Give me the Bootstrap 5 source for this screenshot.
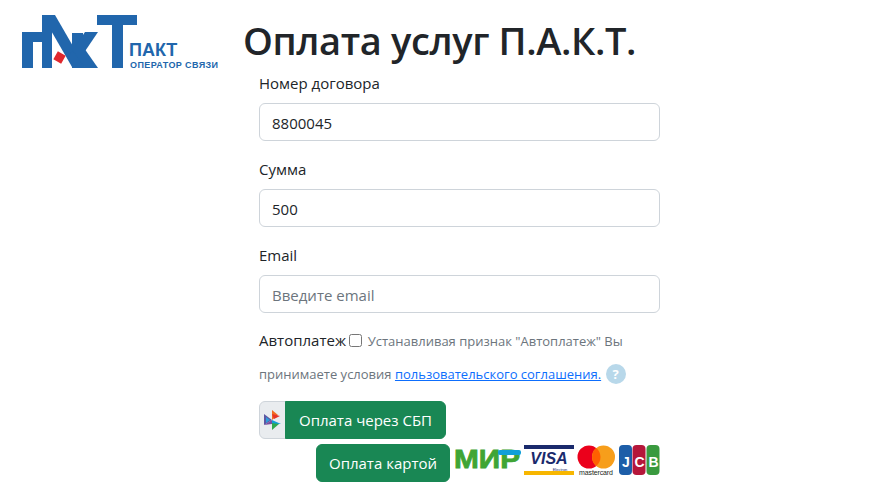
<!DOCTYPE html>
<html lang="ru">
<head>
  <meta charset="UTF-8">
  <title>Оплата услуг П.А.К.Т.</title>
  <meta name="viewport" content="width=device-width, initial-scale=1">
  <link href="https://cdn.jsdelivr.net/npm/bootstrap@5.3.0/dist/css/bootstrap.min.css" rel="stylesheet">
  <style>
    body { font-family: "Open Sans", "Noto Sans", sans-serif; font-size: 15px; color: #212529; }
    .page-head { padding: 15px 0 0 21px; height: 72px; }
    .logo-box { width: 198px; height: 54px; flex: none; }
    .page-title { font-size: 38px; font-weight: 600; line-height: 50px; margin: 0 0 0 24px; letter-spacing: -.38px; }
    .pay-form { width: 401px; margin-left: 259px; }
    .pay-form .form-label { margin-bottom: 9px; line-height: 22px; }
    .pay-form .form-control { height: 38px; font-size: 15px; color: #212529; border-color: #ced4da; padding-top: 7px; padding-bottom: 5px; }
    .pay-form .form-control::placeholder { color: #6c757d; }
    .pay-field { margin-bottom: 17px; }
    .pay-field-last { margin-bottom: 11px; }
    .auto-text { line-height: 33px; color: #6c757d; font-size: 13px; height: 71px; }
    .auto-text .auto-name { color: #212529; font-size: 15px; }
    .auto-text input { width: 13px; height: 13px; vertical-align: -1px; margin-right: 2px; }
    .auto-text a { color: #0d6efd; }
    .help-dot { display: inline-block; width: 20px; height: 20px; line-height: 20px; border-radius: 50%; background: #b8d8ea; color: #fff; font-weight: 700; font-size: 13px; text-align: center; margin-left: 1px; }
    .sbp-btn { margin-top: 6px; }
    .sbp-btn .input-group-text { padding: 0; width: 27px; justify-content: center; background: #e9ecef; border-color: #ced4da; }
    .sbp-btn .btn, .card-line .btn { height: 38px; font-size: 15px; }
    .sbp-btn .btn { width: 161px; padding: 0; }
    .card-line { margin-top: 5px; padding-left: 57px; }
    .card-line .btn { width: 134px; padding: 0; flex: none; }
    .card-marks { margin-left: 4px; flex: none; }
  </style>
</head>
<body>
<div class="page-head d-flex align-items-start">
  <svg class="logo-box" viewBox="0 0 198 54">
    <g fill="#2166ac">
      <rect x="1" y="17" width="11" height="36"/>
      <rect x="1" y="17" width="28" height="10"/>
      <rect x="21" y="0" width="10" height="53"/>
      <rect width="13" height="53" transform="translate(21 0) skewX(30)"/>
      <rect x="51" y="18" width="11" height="35"/>
      <rect width="13" height="25" transform="translate(64 17) skewX(-34)"/>
      <rect width="13" height="20" transform="translate(50 33) skewX(35)"/>
      <rect x="76" y="0" width="40" height="10"/>
      <rect x="91" y="0" width="11" height="53"/>
    </g>
    <rect x="34" y="38" width="9" height="9" fill="#e0282e" transform="rotate(30 38.500 42.500)"/>
    <text x="108" y="41" font-family="Liberation Sans, sans-serif" font-weight="700" font-size="18" fill="#2166ac">ПАКТ</text>
    <text x="109" y="52.500" font-family="Liberation Sans, sans-serif" font-weight="700" font-size="9" fill="#2166ac" textLength="88">ОПЕРАТОР СВЯЗИ</text>
  </svg>
  <h1 class="page-title">Оплата услуг П.А.К.Т.</h1>
</div>

<form class="pay-form">
  <div class="pay-field">
    <label class="form-label" for="contract">Номер договора</label>
    <input type="text" class="form-control" id="contract" value="8800045">
  </div>
  <div class="pay-field">
    <label class="form-label" for="sum">Сумма</label>
    <input type="text" class="form-control" id="sum" value="500">
  </div>
  <div class="pay-field-last">
    <label class="form-label" for="email">Email</label>
    <input type="email" class="form-control" id="email" placeholder="Введите email">
  </div>
  <div class="auto-text">
    <span class="auto-name">Автоплатеж</span>
    <input type="checkbox" id="auto">
    <span>Устанавливая признак "Автоплатеж" Вы</span>
    <span>принимаете условия</span>
    <a href="#">пользовательского соглашения.</a>
    <span class="help-dot">?</span>
  </div>
  <div class="input-group sbp-btn w-auto d-inline-flex">
    <span class="input-group-text">
      <svg width="20" height="22" viewBox="0 0 20 22">
        <polygon points="9,1 15,6 9,11" fill="#f26b21"/>
        <polygon points="9,5 17,7 11,10" fill="#e6332a"/>
        <polygon points="1,5 9,11 1,16" fill="#5b57a2"/>
        <polygon points="3,8 7,11 3,14" fill="#2d9cdb"/>
        <polygon points="1,16 9,11 9,15" fill="#7a4f9f"/>
        <polygon points="9,11 18,15 9,15" fill="#0f9fd8"/>
        <polygon points="9,14 16,15 9,21" fill="#2fa84f"/>
      </svg>
    </span>
    <button type="button" class="btn btn-success">Оплата через СБП</button>
  </div>
  <div class="card-line d-flex align-items-center">
    <button type="button" class="btn btn-success">Оплата картой</button>
    <svg class="card-marks" width="206" height="36" viewBox="0 0 206 36">
      <text x="0" y="23" font-family="Liberation Sans, sans-serif" font-weight="700" font-size="25" fill="#3fa535" stroke="#3fa535" stroke-width=".8" textLength="66" lengthAdjust="spacingAndGlyphs">МИР</text>
      <rect x="44" y="5" width="23" height="5" rx="2" fill="#0f9fd8"/>
      <rect x="70" y="0" width="50" height="4" fill="#1a2a6c"/>
      <text x="95" y="18.500" text-anchor="middle" font-family="Liberation Sans, sans-serif" font-weight="700" font-style="italic" font-size="16" fill="#1a2a6c">VISA</text>
      <text x="106" y="25.500" text-anchor="middle" font-family="Liberation Sans, sans-serif" font-size="4" fill="#1a2a6c">Electron</text>
      <rect x="70" y="26" width="50" height="4" fill="#f7b600"/>
      <circle cx="135" cy="12" r="11.500" fill="#eb001b"/>
      <circle cx="149.500" cy="12" r="11.500" fill="#f79e1b"/>
      <path d="M142.250 3.100a11.500 11.500 0 0 1 0 17.800a11.500 11.500 0 0 1 0-17.800z" fill="#ff5f00"/>
      <text x="142" y="30" text-anchor="middle" font-family="Liberation Sans, sans-serif" font-size="7" fill="#231f20" textLength="34">mastercard</text>
      <rect x="165" y="0" width="13" height="30" rx="4" fill="#1d5ea8"/>
      <rect x="178.500" y="0" width="13" height="30" rx="4" fill="#b5173a"/>
      <rect x="192.500" y="0" width="13" height="30" rx="4" fill="#3a9a3f"/>
      <text x="172" y="21.500" text-anchor="middle" font-family="Liberation Sans, sans-serif" font-weight="700" font-size="14" fill="#fff">J</text>
      <text x="185.500" y="21.500" text-anchor="middle" font-family="Liberation Sans, sans-serif" font-weight="700" font-size="14" fill="#fff">C</text>
      <text x="199.500" y="21.500" text-anchor="middle" font-family="Liberation Sans, sans-serif" font-weight="700" font-size="14" fill="#fff">B</text>
    </svg>
  </div>
</form>
<script src="https://cdn.jsdelivr.net/npm/bootstrap@5.3.0/dist/js/bootstrap.bundle.min.js"></script>
</body>
</html>
